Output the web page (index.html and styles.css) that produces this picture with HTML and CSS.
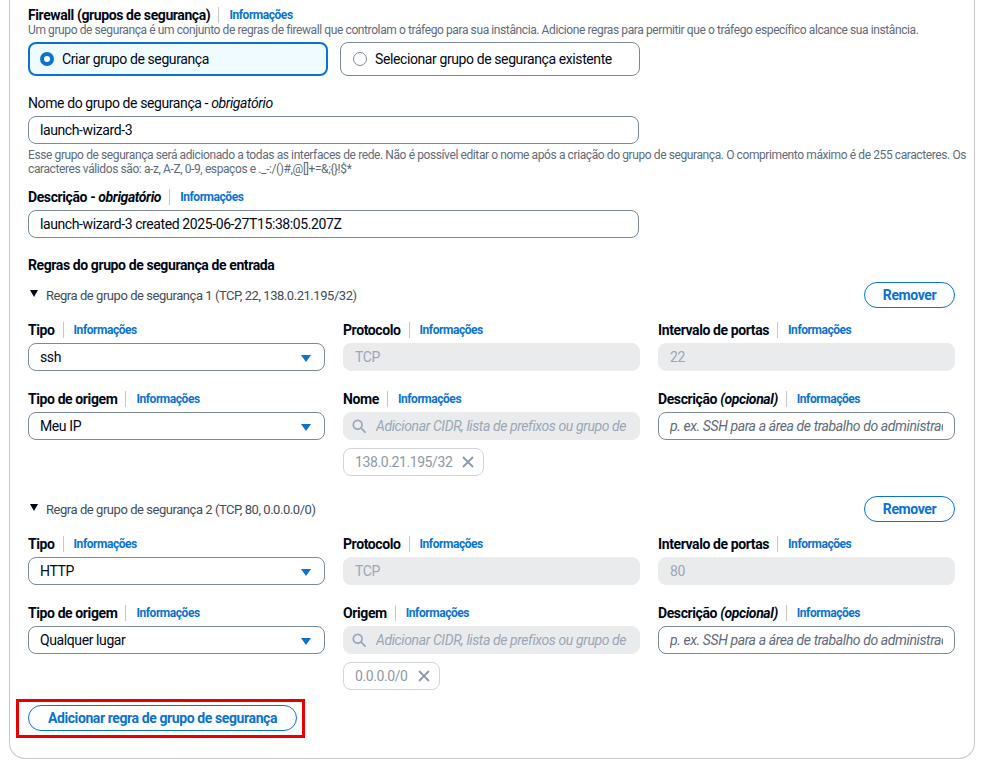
FILE: index.html
```html
<!DOCTYPE html>
<html lang="pt">
<head>
<meta charset="utf-8">
<link rel="stylesheet" href="styles.css">
</head>
<body>
<div class="card">
  <div class="label-row first"><span class="label">Firewall (grupos de segurança)</span><span class="sep"></span><a class="info">Informações</a></div>
  <div class="desc">Um grupo de segurança é um conjunto de regras de firewall que controlam o tráfego para sua instância. Adicione regras para permitir que o tráfego específico alcance sua instância.</div>
  <div class="tiles">
    <div class="tile selected"><span class="radio on"></span>Criar grupo de segurança</div>
    <div class="tile"><span class="radio"></span>Selecionar grupo de segurança existente</div>
  </div>

  <div class="label-row gap17"><span class="label normal">Nome do grupo de segurança - <i>obrigatório</i></span></div>
  <div class="input wide">launch-wizard-3</div>
  <div class="help">Esse grupo de segurança será adicionado a todas as interfaces de rede. Não é possível editar o nome após a criação do grupo de segurança. O comprimento máximo é de 255 caracteres. Os caracteres válidos são: a-z, A-Z, 0-9, espaços e ._-:/()#,@[]+=&amp;;{}!$*</div>

  <div class="label-row gap11"><span class="label">Descrição - <i>obrigatório</i></span><span class="sep"></span><a class="info">Informações</a></div>
  <div class="input wide">launch-wizard-3 created 2025-06-27T15:38:05.207Z</div>

  <div class="section-title">Regras do grupo de segurança de entrada</div>

  <div class="rule">
    <div class="rule-head">
      <span class="rule-title"><span class="caret"></span>Regra de grupo de segurança 1 (TCP, 22, 138.0.21.195/32)</span>
      <button class="btn-outline">Remover</button>
    </div>
    <div class="grid">
      <div class="field">
        <div class="label-row"><span class="label">Tipo</span><span class="sep"></span><a class="info">Informações</a></div>
        <div class="input select">ssh<span class="dd"></span></div>
      </div>
      <div class="field">
        <div class="label-row"><span class="label">Protocolo</span><span class="sep"></span><a class="info">Informações</a></div>
        <div class="input disabled">TCP</div>
      </div>
      <div class="field">
        <div class="label-row"><span class="label">Intervalo de portas</span><span class="sep"></span><a class="info">Informações</a></div>
        <div class="input disabled">22</div>
      </div>
    </div>
    <div class="grid row2">
      <div class="field">
        <div class="label-row"><span class="label">Tipo de origem</span><span class="sep"></span><a class="info">Informações</a></div>
        <div class="input select">Meu IP<span class="dd"></span></div>
      </div>
      <div class="field">
        <div class="label-row"><span class="label">Nome</span><span class="sep"></span><a class="info">Informações</a></div>
        <div class="input disabled search"><svg class="mag" width="14" height="14" viewBox="0 0 16 16"><circle cx="6.5" cy="6.5" r="5" fill="none" stroke="#9ba7b6" stroke-width="2"/><path d="M10.2 10.2L15 15" stroke="#9ba7b6" stroke-width="2" stroke-linecap="round"/></svg><span class="ph">Adicionar CIDR, lista de prefixos ou grupo de segurança</span></div>
        <div class="token">138.0.21.195/32<svg width="12" height="12" viewBox="0 0 12 12"><path d="M1 1L11 11M11 1L1 11" stroke="#8d99a8" stroke-width="1.8"/></svg></div>
      </div>
      <div class="field">
        <div class="label-row"><span class="label">Descrição <i>(opcional)</i></span><span class="sep"></span><a class="info">Informações</a></div>
        <div class="input"><span class="ph dark">p. ex. SSH para a área de trabalho do administrador</span></div>
      </div>
    </div>
  </div>

  <div class="rule r2">
    <div class="rule-head">
      <span class="rule-title"><span class="caret"></span>Regra de grupo de segurança 2 (TCP, 80, 0.0.0.0/0)</span>
      <button class="btn-outline">Remover</button>
    </div>
    <div class="grid">
      <div class="field">
        <div class="label-row"><span class="label">Tipo</span><span class="sep"></span><a class="info">Informações</a></div>
        <div class="input select">HTTP<span class="dd"></span></div>
      </div>
      <div class="field">
        <div class="label-row"><span class="label">Protocolo</span><span class="sep"></span><a class="info">Informações</a></div>
        <div class="input disabled">TCP</div>
      </div>
      <div class="field">
        <div class="label-row"><span class="label">Intervalo de portas</span><span class="sep"></span><a class="info">Informações</a></div>
        <div class="input disabled">80</div>
      </div>
    </div>
    <div class="grid row2">
      <div class="field">
        <div class="label-row"><span class="label">Tipo de origem</span><span class="sep"></span><a class="info">Informações</a></div>
        <div class="input select">Qualquer lugar<span class="dd"></span></div>
      </div>
      <div class="field">
        <div class="label-row"><span class="label">Origem</span><span class="sep"></span><a class="info">Informações</a></div>
        <div class="input disabled search"><svg class="mag" width="14" height="14" viewBox="0 0 16 16"><circle cx="6.5" cy="6.5" r="5" fill="none" stroke="#9ba7b6" stroke-width="2"/><path d="M10.2 10.2L15 15" stroke="#9ba7b6" stroke-width="2" stroke-linecap="round"/></svg><span class="ph">Adicionar CIDR, lista de prefixos ou grupo de segurança</span></div>
        <div class="token">0.0.0.0/0<svg width="12" height="12" viewBox="0 0 12 12"><path d="M1 1L11 11M11 1L1 11" stroke="#8d99a8" stroke-width="1.8"/></svg></div>
      </div>
      <div class="field">
        <div class="label-row"><span class="label">Descrição <i>(opcional)</i></span><span class="sep"></span><a class="info">Informações</a></div>
        <div class="input"><span class="ph dark">p. ex. SSH para a área de trabalho do administrador</span></div>
      </div>
    </div>
  </div>

  <div class="highlight"><button class="btn-outline add">Adicionar regra de grupo de segurança</button></div>
</div>
</body>
</html>
```

FILE: styles.css
```css
* { box-sizing: border-box; }
html, body { margin: 0; padding: 0; background: #ffffff; }
body {
  font-family: Roboto, "Noto Sans", Arial, sans-serif;
  font-size: 14px;
  letter-spacing: -0.4px;
  color: #000716;
  width: 983px;
  height: 764px;
  overflow: hidden;
}
.card {
  margin-left: 9px;
  width: 966px;
  border: 1px solid #c6c6cd;
  border-top: none;
  border-radius: 0 0 16px 16px;
  padding: 7px 19px 20px 18px;
}
.label-row {
  display: flex;
  align-items: center;
  height: 20px;
  line-height: 20px;
}
.label-row.first { height: 16px; line-height: 16px; }
.gap17 { margin-top: 17px; }
.gap11 { margin-top: 11px; }
.label { font-weight: 700; font-size: 14px; }
.label.normal { font-weight: 400; }
.label i { font-style: italic; }
.sep {
  width: 1px;
  height: 16px;
  background: #c6c6cd;
  margin: 0 10px 0 8px;
}
.info {
  color: #0972d3;
  font-weight: 700;
  font-size: 12px;
  letter-spacing: -0.45px;
}
.desc {
  font-size: 12px;
  line-height: 14px;
  color: #5f6b7a;
  white-space: nowrap;
}
.tiles {
  display: flex;
  gap: 12px;
  margin-top: 5px;
}
.tile {
  width: 300px;
  height: 34px;
  border: 1px solid #7d8998;
  border-radius: 8px;
  display: flex;
  align-items: center;
  padding-left: 12px;
  gap: 8px;
  font-size: 14px;
}
.tile.selected {
  border: 2px solid #0972d3;
  background: #f0fbff;
  padding-left: 10px;
}
.radio {
  width: 14px;
  height: 14px;
  border-radius: 50%;
  border: 1px solid #7d8998;
  background: #fff;
  flex: none;
}
.radio.on { border: 4px solid #0972d3; }
.input {
  height: 28px;
  border: 1px solid #7d8998;
  border-radius: 8px;
  margin-top: 3px;
  padding: 0 11px;
  display: flex;
  align-items: center;
  font-size: 14px;
  white-space: nowrap;
  overflow: hidden;
  position: relative;
}
.input.wide { width: 611px; }
.help {
  font-size: 12px;
  line-height: 14px;
  color: #5f6b7a;
  margin-top: 4px;
  width: 940px;
}
.section-title {
  font-weight: 700;
  font-size: 14px;
  line-height: 20px;
  margin-top: 17px;
}
.rule { margin-top: 7px; }
.rule.r2 { margin-top: 20px; }
.rule-head {
  display: flex;
  justify-content: space-between;
  align-items: center;
  height: 26px;
}
.rule-title {
  display: flex;
  align-items: center;
  color: #414d5c;
  font-size: 13px;
  letter-spacing: -0.45px;
}
.caret {
  width: 0; height: 0;
  border-left: 4.5px solid transparent;
  border-right: 4.5px solid transparent;
  border-top: 7px solid #000716;
  margin: 0 8px 0 2px;
  position: relative;
  top: -2px;
}
.btn-outline {
  font-family: inherit;
  letter-spacing: -0.4px;
  height: 26px;
  border: 1.5px solid #0972d3;
  border-radius: 20px;
  background: #fff;
  color: #0972d3;
  font-weight: 700;
  font-size: 14px;
  padding: 0;
  width: 91px;
}
.grid {
  display: grid;
  grid-template-columns: 297px 297px 297px;
  column-gap: 18px;
  margin-top: 12px;
}
.grid.row2 { margin-top: 18px; }
.select { padding-right: 30px; }
.dd {
  position: absolute;
  right: 13px;
  top: 11px;
  width: 0; height: 0;
  border-left: 5px solid transparent;
  border-right: 5px solid transparent;
  border-top: 7px solid #0972d3;
}
.disabled {
  background: #e9ebed;
  border-color: #e9ebed;
  color: #9ba7b6;
}
.search { gap: 10px; padding-left: 8px; }
.mag { flex: none; }
.ph {
  font-style: italic;
  color: #9ba7b6;
  overflow: hidden;
}
.ph.dark { color: #5f6b7a; }
.token {
  display: inline-flex;
  align-items: center;
  gap: 10px;
  height: 28px;
  margin-top: 8px;
  border: 1px solid #d1d5db;
  border-radius: 8px;
  padding: 0 9px 0 11px;
  color: #8d99a8;
  font-size: 14px;
}
.highlight {
  margin-top: 9px;
  margin-left: -12px;
  width: 289px;
  height: 39px;
  border: 3px solid #e60000;
  padding: 3px 5px 4px 9px;
}
.btn-outline.add {
  width: 269px;
}
```
